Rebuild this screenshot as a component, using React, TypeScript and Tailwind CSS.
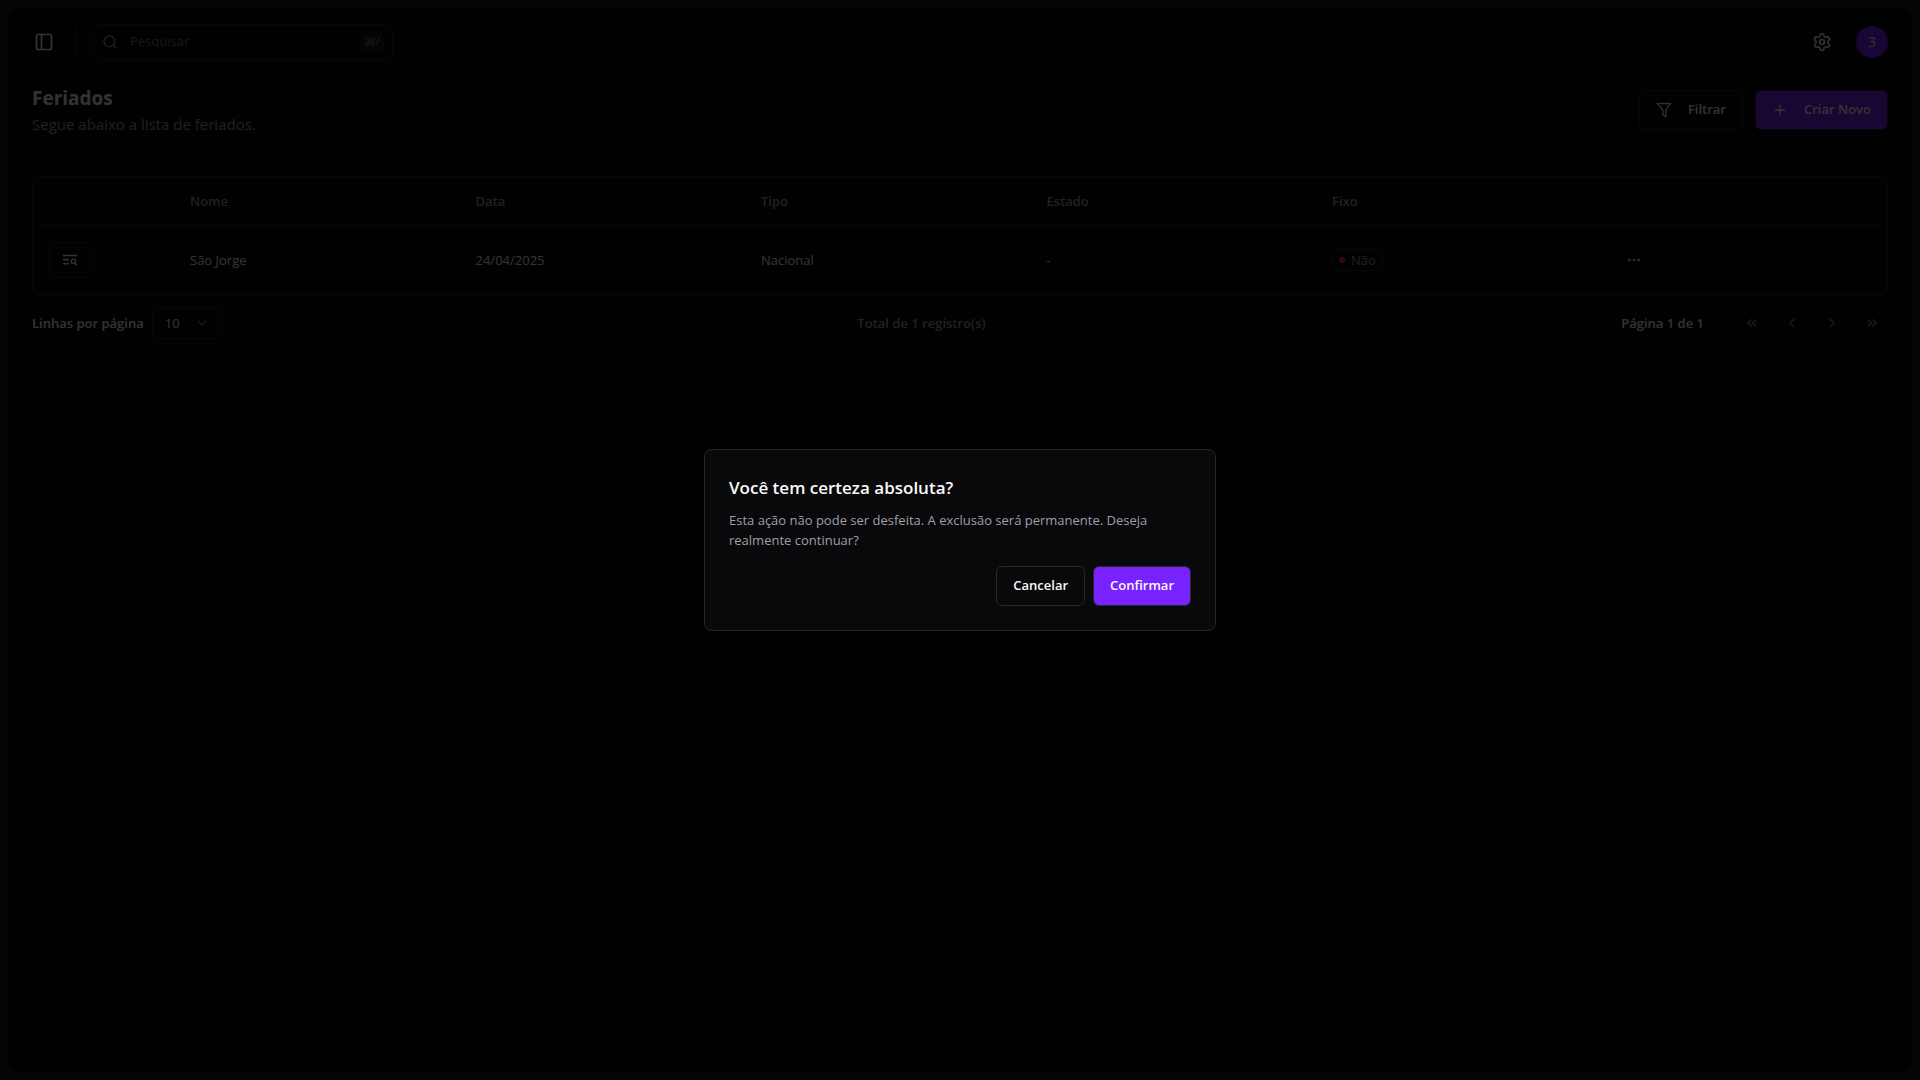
import React from 'react';
import {
  ChevronDown,
  ChevronLeft,
  ChevronRight,
  ChevronsLeft,
  ChevronsRight,
  Ellipsis,
  PanelLeft,
  Plus,
  Search,
  Settings,
} from 'lucide-react';

interface Holiday {
  id: number;
  name: string;
  date: string;
  type: string;
  state: string;
  fixed: boolean;
}

const holidays: Holiday[] = [
  { id: 1, name: 'São Jorge', date: '24/04/2025', type: 'Nacional', state: '-', fixed: false },
];

const columns = ['Nome', 'Data', 'Tipo', 'Estado', 'Fixo'];

const FilterIcon = () => (
  <svg viewBox="0 0 16 16" className="h-4 w-4" fill="none" stroke="currentColor" strokeWidth="1.2" strokeLinejoin="miter">
    <path d="M1.5 1.6h13L9.8 8v6.4L6.8 12.6V8z" />
  </svg>
);

const DetailsIcon = () => (
  <svg viewBox="0 0 16 16" className="h-4 w-4" fill="none" stroke="currentColor" strokeWidth="1.6">
    <path d="M1 3.5h14M1 7.6h6M1 11.7h6" />
    <circle cx="11.4" cy="9.3" r="2.2" strokeWidth="1.4" />
    <path d="M12.8 11l2 2.2" />
  </svg>
);

const Header = () => (
  <header className="flex items-center justify-between px-6 py-4">
    <div className="flex items-center">
      <button aria-label="Alternar menu" className="flex h-6 w-6 items-center justify-center">
        <PanelLeft className="h-5 w-5" />
      </button>
      <div className="mr-4 ml-5 h-8 w-px bg-zinc-800" />
      <label className="flex h-9 w-[300px] items-center rounded-lg border border-zinc-800 px-2 text-zinc-400">
        <Search className="h-4 w-4" />
        <input
          type="text"
          aria-label="Pesquisar"
          placeholder="Pesquisar"
          className="ml-3 min-w-0 flex-1 bg-transparent text-[13px] outline-none placeholder:text-zinc-500"
        />
        <kbd className="rounded bg-zinc-900 px-1 font-[Noto_Sans,sans-serif] text-[12px] leading-[18px] text-zinc-500">⌘/</kbd>
      </label>
    </div>
    <div className="flex items-center gap-6">
      <button aria-label="Configurações">
        <Settings className="h-5 w-5" />
      </button>
      <button className="h-8 w-8 rounded-full bg-[#7722ff] text-sm">3</button>
    </div>
  </header>
);

const Pager = () => {
  const items = [
    { label: 'Primeira página', icon: ChevronsLeft },
    { label: 'Página anterior', icon: ChevronLeft },
    { label: 'Próxima página', icon: ChevronRight },
    { label: 'Última página', icon: ChevronsRight },
  ];
  return (
    <div className="flex gap-2">
      {items.map(({ label, icon: Icon }) => (
        <button
          key={label}
          disabled
          aria-label={label}
          className="flex h-8 w-8 items-center justify-center rounded-md border border-zinc-800 opacity-50"
        >
          <Icon className="h-4 w-4" />
        </button>
      ))}
    </div>
  );
};

const ConfirmDialog = () => (
  <div className="fixed inset-0 flex items-center justify-center bg-black/80">
    <div
      role="alertdialog"
      aria-labelledby="confirm-title"
      aria-describedby="confirm-text"
      className="w-full max-w-lg rounded-lg border border-zinc-800 bg-zinc-950 p-6"
    >
      <h2 id="confirm-title" className="text-[17px] leading-7 font-semibold">Você tem certeza absoluta?</h2>
      <p id="confirm-text" className="mt-2 pr-6 text-[13px] leading-5 text-zinc-400">
        Esta ação não pode ser desfeita. A exclusão será permanente. Deseja realmente continuar?
      </p>
      <div className="mt-4 flex justify-end gap-2">
        <button className="h-10 rounded-md border border-zinc-800 px-4 text-[13px] font-semibold">Cancelar</button>
        <button className="h-10 rounded-md border border-zinc-800 bg-[#7722ff] px-4 text-[13px] font-semibold">Confirmar</button>
      </div>
    </div>
  </div>
);

export default function App() {
  return (
    <div className="flex min-h-screen bg-zinc-900 p-2 font-[Open_Sans,Noto_Sans,sans-serif] text-zinc-50">
      <div className="flex-1 rounded-xl bg-zinc-950">
        <Header />
        <main className="px-6 pt-2">
          <div className="flex items-center justify-between">
            <div>
              <h1 className="text-[19px] leading-7 font-bold">Feriados</h1>
              <p className="text-[15px] leading-6 text-zinc-400">Segue abaixo a lista de feriados.</p>
            </div>
            <div className="flex gap-3">
              <button className="flex h-10 items-center gap-4 rounded-md border border-zinc-800 px-4 text-[13px] font-semibold">
                <FilterIcon />
                Filtrar
              </button>
              <button className="flex h-10 items-center gap-4 rounded-md border border-zinc-800 bg-[#7722ff] px-4 text-[13px] font-semibold">
                <Plus className="h-4 w-4" />
                Criar Novo
              </button>
            </div>
          </div>

          <div className="mt-10 rounded-md border border-zinc-800">
            <table className="w-full table-fixed text-left text-[13px] leading-5">
              <thead>
                <tr className="h-12 border-b border-zinc-800 text-zinc-400">
                  <th className="w-[141px]" />
                  {columns.map((column) => (
                    <th key={column} className="px-4 font-semibold">{column}</th>
                  ))}
                  <th />
                </tr>
              </thead>
              <tbody>
                {holidays.map((holiday) => (
                  <tr key={holiday.id} className="h-[69px]">
                    <td className="px-4">
                      <button
                        aria-label="Detalhes"
                        className="flex h-9 w-[42px] items-center justify-center rounded-md border border-zinc-800"
                      >
                        <DetailsIcon />
                      </button>
                    </td>
                    <td className="px-4">{holiday.name}</td>
                    <td className="px-4">{holiday.date}</td>
                    <td className="px-4">{holiday.type}</td>
                    <td className="px-4">{holiday.state}</td>
                    <td className="px-4">
                      <span className="flex w-fit items-center gap-1.5 rounded-lg border border-zinc-800 px-1.5 text-zinc-400">
                        <span className="h-1.5 w-1.5 rounded-full bg-rose-500" />
                        {holiday.fixed ? 'Sim' : 'Não'}
                      </span>
                    </td>
                    <td className="px-4">
                      <button aria-label="Ações" className="flex h-8 w-8 items-center justify-center">
                        <Ellipsis className="h-4 w-4" />
                      </button>
                    </td>
                  </tr>
                ))}
              </tbody>
            </table>
          </div>

          <div className="mt-3 flex items-center justify-between text-[13px] leading-5 font-semibold">
            <div className="flex items-center gap-2">
              <label htmlFor="page-size">Linhas por página</label>
              <div className="relative">
                <select
                  id="page-size"
                  defaultValue="10"
                  className="h-8 w-[70px] appearance-none rounded-md border border-zinc-800 bg-transparent px-3 font-normal"
                >
                  <option>10</option>
                </select>
                <ChevronDown className="pointer-events-none absolute top-2 right-3 h-4 w-4 opacity-50" />
              </div>
            </div>
            <p className="text-zinc-400">Total de 1 registro(s)</p>
            <div className="flex items-center gap-8">
              <p>Página 1 de 1</p>
              <Pager />
            </div>
          </div>
        </main>
      </div>
      <ConfirmDialog />
    </div>
  );
}
